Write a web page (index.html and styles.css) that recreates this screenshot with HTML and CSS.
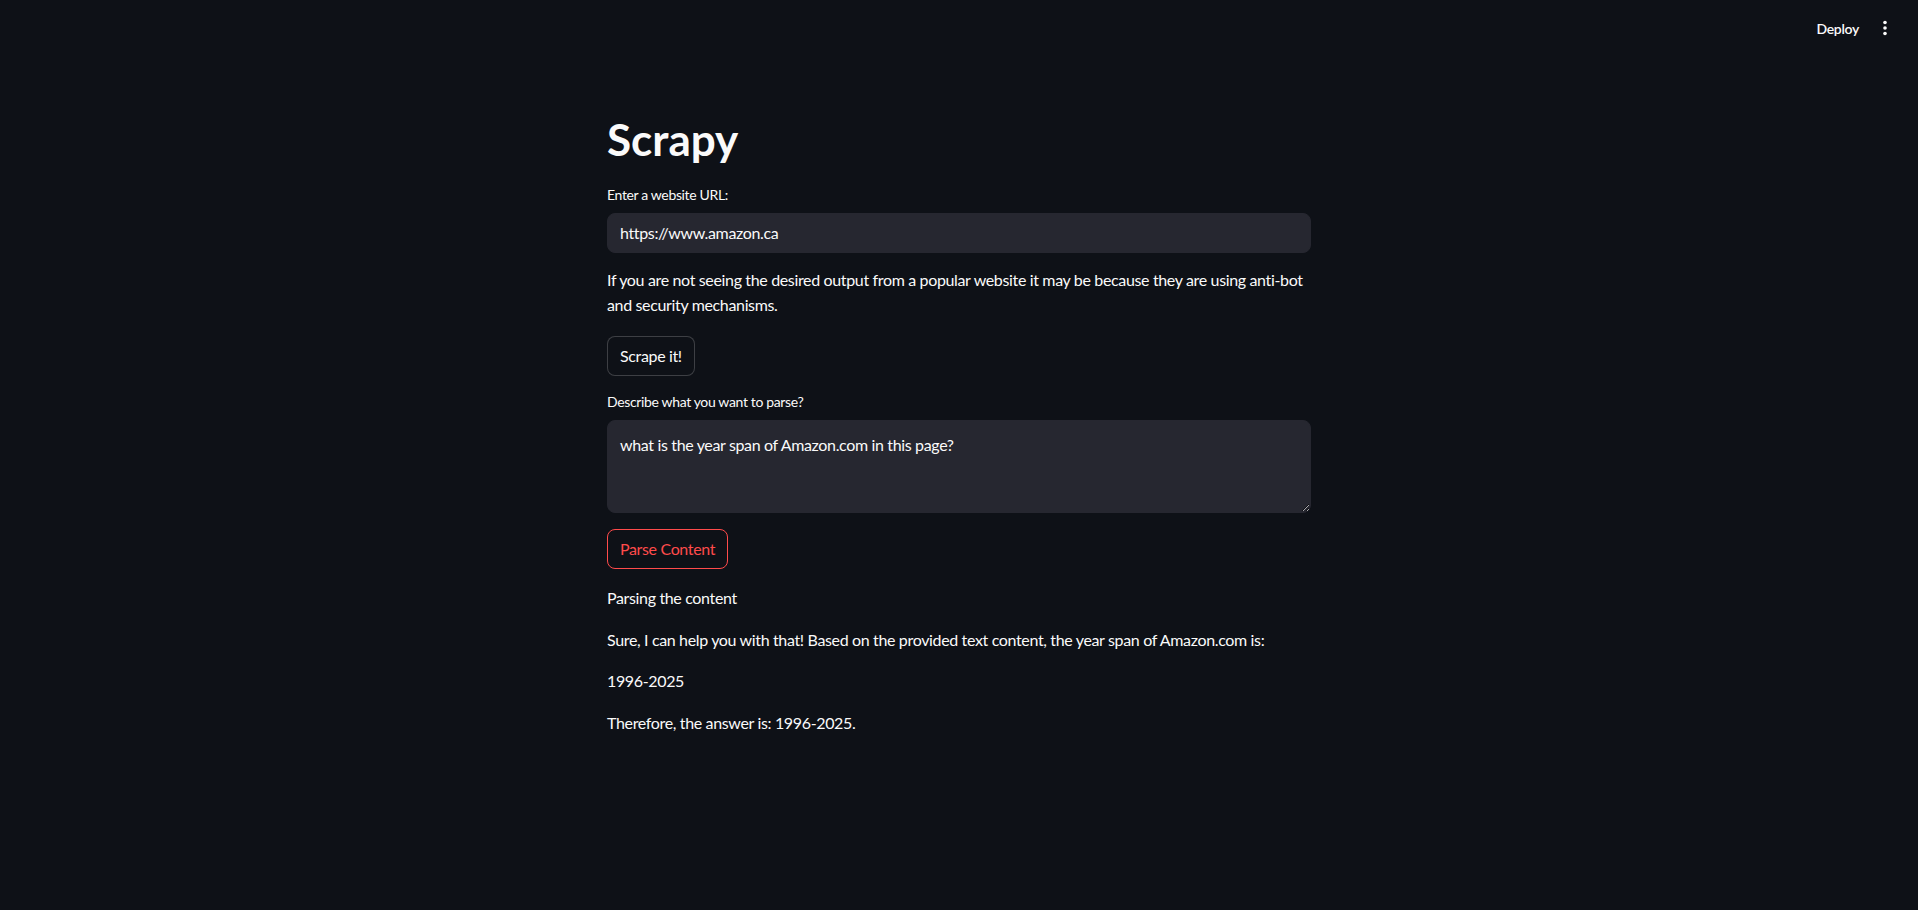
FILE: index.html
```html
<!DOCTYPE html>
<html lang="en">
<head>
<meta charset="utf-8">
<title>Scrapy</title>
<link rel="stylesheet" href="styles.css">
</head>
<body>
<header class="topbar">
  <button class="deploy">Deploy</button>
  <button class="menu" aria-label="Main menu">
    <svg width="24" height="24" viewBox="0 0 24 24"><circle cx="12" cy="6.5" r="1.8" fill="#fafafa"/><circle cx="12" cy="12" r="1.8" fill="#fafafa"/><circle cx="12" cy="17.5" r="1.8" fill="#fafafa"/></svg>
  </button>
</header>
<main class="main">
  <div class="block">
    <h1 class="title">Scrapy</h1>
    <div class="field">
      <label class="label" for="url">Enter a website URL:</label>
      <input id="url" class="input" type="text" value="https://www.amazon.ca">
    </div>
    <p class="text text-note">If you are not seeing the desired output from a popular website it may be because they are using anti-bot and security mechanisms.</p>
    <div><button class="btn">Scrape it!</button></div>
    <div class="field">
      <label class="label" for="q">Describe what you want to parse?</label>
      <textarea id="q" class="area">what is the year span of Amazon.com in this page?</textarea>
    </div>
    <div><button class="btn btn-active">Parse Content</button></div>
    <p class="text">Parsing the content</p>
    <p class="text">Sure, I can help you with that! Based on the provided text content, the year span of Amazon.com is:</p>
    <p class="text">1996-2025</p>
    <p class="text">Therefore, the answer is: 1996-2025.</p>
  </div>
</main>
</body>
</html>
```
FILE: styles.css
```css
* { box-sizing: border-box; }
html, body { margin: 0; padding: 0; }
body {
  background: #0e1117;
  color: #fafafa;
  font-family: "Lato", "Noto Sans", sans-serif;
  font-size: 16px;
  letter-spacing: -0.35px;
  min-height: 910px;
}
.topbar {
  position: fixed;
  top: 0; left: 0; right: 0;
  height: 56px;
  display: flex;
  justify-content: flex-end;
  align-items: center;
  padding-right: 21px;
  gap: 6px;
  background: #0e1117;
}
.deploy {
  background: transparent;
  border: none;
  color: #fafafa;
  font-family: inherit;
  font-size: 14px;
  font-weight: 600;
  letter-spacing: -0.3px;
  padding: 4px 8px;
}
.menu {
  background: transparent;
  border: none;
  padding: 0;
  width: 24px;
  height: 24px;
  display: flex;
}
.main {
  display: flex;
  justify-content: center;
  padding: 96px 16px 160px;
}
.block {
  width: 704px;
  display: flex;
  flex-direction: column;
  gap: 16px;
}
.title {
  margin: 0;
  padding: 17px 0 3px;
  font-size: 44px;
  font-weight: 700;
  line-height: 1.2;
  letter-spacing: 0;
}
.field { display: flex; flex-direction: column; }
.label {
  font-size: 14px;
  line-height: 20px;
  margin-bottom: 8px;
}
.input, .area {
  background: #262730;
  border: 1px solid #262730;
  border-radius: 8px;
  color: #fafafa;
  font-family: inherit;
  font-size: 16px;
  letter-spacing: -0.35px;
  outline: none;
}
.input {
  height: 40px;
  padding: 0 12px;
}
.area {
  height: 93px;
  padding: 11px 12px 12px;
  line-height: 1.6;
  resize: vertical;
}
.text {
  margin: 0;
  line-height: 1.6;
}
.text-note {
  margin: -2px 0 2px;
}
.btn {
  background: #0e1117;
  color: #fafafa;
  border: 1px solid rgba(250, 250, 250, 0.2);
  border-radius: 8px;
  min-height: 40px;
  padding: 4px 12px;
  font-family: inherit;
  font-size: 16px;
  letter-spacing: -0.35px;
  line-height: 1.6;
}
.btn-active {
  border-color: #ff4b4b;
  color: #ff4b4b;
}
```
